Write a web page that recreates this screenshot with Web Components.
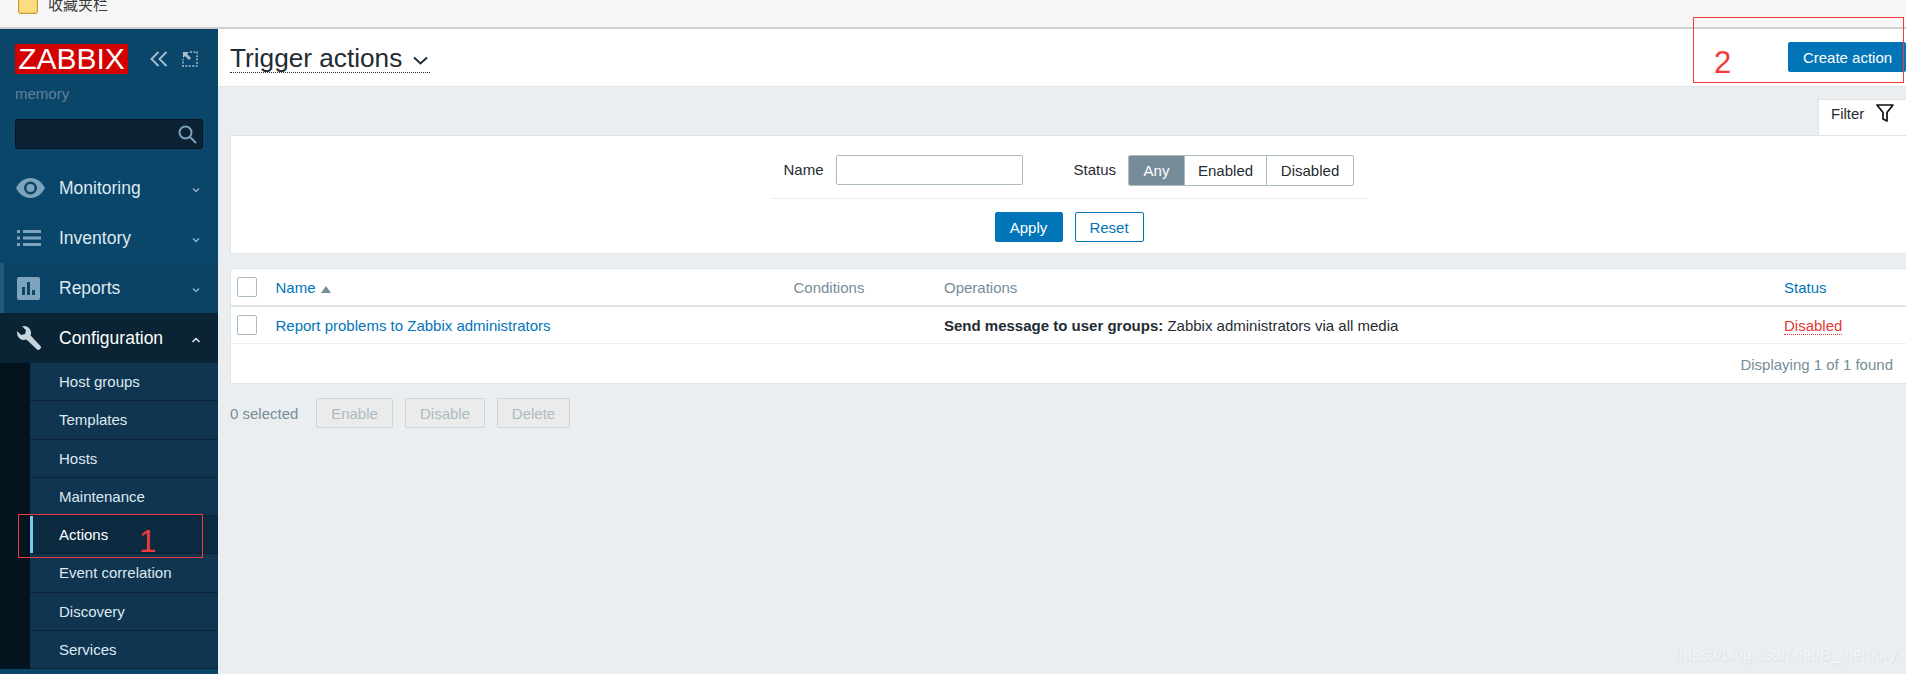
<!DOCTYPE html>
<html lang="en">
<head>
<meta charset="utf-8">
<title>Trigger actions</title>
<style>
html,body{margin:0;padding:0;height:674px;overflow:hidden;background:#ebeef0;font:15px "Liberation Sans",Arial,sans-serif;color:#1f2c33}
</style>
</head>
<body>
<z-app>
  <z-bookmarks slot="top">收藏夹栏</z-bookmarks>
  <z-sidebar slot="side">
    <z-nav icon="eye">Monitoring</z-nav>
    <z-nav icon="list">Inventory</z-nav>
    <z-nav icon="chart" mark>Reports</z-nav>
    <z-nav icon="wrench" open>Configuration</z-nav>
    <z-submenu>
      <z-sub>Host groups</z-sub>
      <z-sub>Templates</z-sub>
      <z-sub>Hosts</z-sub>
      <z-sub>Maintenance</z-sub>
      <z-sub selected>Actions</z-sub>
      <z-sub>Event correlation</z-sub>
      <z-sub>Discovery</z-sub>
      <z-sub>Services</z-sub>
    </z-submenu>
  </z-sidebar>
  <z-header slot="main">Trigger actions</z-header>
  <z-filter slot="main"></z-filter>
  <z-table slot="main"></z-table>
  <z-actions slot="main"></z-actions>
  <z-note slot="over" n="1" style="left:18px;top:514px;width:183px;height:42px;--nx:120px;--ny:11px"></z-note>
  <z-note slot="over" n="2" style="left:1693px;top:17px;width:209px;height:64px;--nx:20px;--ny:29px"></z-note>
  <z-mark slot="over">https://blog.csdn.net/B_memory</z-mark>
</z-app>
<script>
function def(name, html){
  customElements.define(name, class extends HTMLElement{
    constructor(){super();const r=this.attachShadow({mode:'open'});r.innerHTML=typeof html==='function'?html(this):html;}
  });
}
const ICONS={
 eye:'<svg width="29" height="20" viewBox="0 0 29 20"><path fill="#7ea3bd" fill-rule="evenodd" d="M14.5 0C8 0 3 4.200 0 10c3 5.800 8 10 14.500 10S26 15.800 29 10C26 4.200 21 0 14.500 0zm0 3.500a6.500 6.500 0 1 1 0 13 6.500 6.500 0 0 1 0-13zm0 2.500a4 4 0 1 0 0 8 4 4 0 0 0 0-8z"/></svg>',
 list:'<svg width="24" height="16" viewBox="0 0 24 16"><path fill="#7ea3bd" d="M0 0h3v3H0zM6 0h18v3H6zM0 6.500h3v3H0zM6 6.500h18v3H6zM0 13h3v3H0zM6 13h18v3H6z"/></svg>',
 chart:'<svg width="23" height="23" viewBox="0 0 23 23"><rect width="23" height="23" rx="2" fill="#7ea3bd"/><path fill="#0a466a" d="M5 10h3v8H5zM10 5h3v13h-3zM15 13h3v5h-3z"/></svg>',
 wrench:'<svg width="24" height="24" viewBox="0 0 24 24"><path fill="#c6d4de" d="M7 0a7 7 0 0 0-1.800.3L9 4.200 8 8 4.200 9 .3 5.200A7 7 0 0 0 9.400 13.600L20 23.600c.7.600 1.800.6 2.500-.1l1-1c.7-.7.700-1.800 0-2.500L13.600 9.400A7 7 0 0 0 7 0z"/></svg>'
};
def('z-app',`<style>
:host{display:flex;flex-direction:column;width:1906px;height:674px;position:relative;overflow:hidden}
.row{display:flex;flex:1;min-height:0}
.main{flex:1;min-width:0;display:flex;flex-direction:column}
</style><slot name="top"></slot><div class="row"><slot name="side"></slot><div class="main"><slot name="main"></slot></div></div><slot name="over"></slot>`);
def('z-bookmarks',`<style>
:host{display:flex;height:27px;flex:none;box-sizing:content-box;background:#f6f6f6;border-bottom:2px solid #cfcfcf;overflow:hidden;align-items:flex-end;padding-left:18px;gap:10px;color:#3c3c3c;font:15px "Liberation Sans","Noto Sans CJK SC",sans-serif}
svg{flex:none;margin-bottom:13px}
span{line-height:17px;margin-bottom:14px}
</style><svg width="20" height="20" viewBox="0 0 20 20"><path fill="#fcdc80" stroke="#c99f32" stroke-width="1.200" d="M.6 2.500A2 2 0 0 1 2.500.6h15a2 2 0 0 1 1.900 1.900v15a2 2 0 0 1-1.900 1.900h-15a2 2 0 0 1-1.900-1.900z"/></svg><span><slot></slot></span>`);
def('z-sidebar',`<style>
:host{display:flex;flex-direction:column;width:218px;flex:none;background:#0a466a;box-sizing:border-box;padding-bottom:5px}
.brand{display:flex;align-items:center;height:30px;margin:15px 0 0 15px}
.logo{width:113px;height:30px;background:#d40000;color:#fff;font:400 30px/30px "Liberation Sans",sans-serif;text-align:center;flex:none}
.c1{margin-left:22px}.c2{margin-left:14px}
.site{margin:11px 0 0 15px;height:18px;line-height:18px;color:#5f8299;font-size:15px}
.search{margin:16px 15px 0;height:30px;box-sizing:border-box;background:#0a2233;border:1px solid #04141f;border-radius:3px;display:flex;align-items:center;justify-content:flex-end;padding-right:5px}
.nav{margin-top:14px;display:flex;flex-direction:column;flex:1;min-height:0}
</style>
<div class="brand"><div class="logo">ZABBIX</div>
<svg class="c1" width="18" height="18" viewBox="0 0 18 18" fill="none" stroke="#a9c2d3" stroke-width="1.800"><path d="M8.500 2 1.500 9l7 7M16.500 2l-7 7 7 7"/></svg>
<svg class="c2" width="16" height="16" viewBox="0 0 16 16" fill="none" stroke="#a9c2d3" stroke-width="1.400"><path stroke-dasharray="2 1.400" d="M8 1h7v14H1V8"/><path fill="#a9c2d3" stroke="none" d="M1 1h6L5 3l4 4-2 2-4-4-2 2z"/></svg></div>
<div class="site">memory</div>
<div class="search"><svg width="19" height="19" viewBox="0 0 19 19" fill="none" stroke="#7ea3bd" stroke-width="2"><circle cx="7.500" cy="7.500" r="6"/><path d="m12 12 6 6"/></svg></div>
<div class="nav"><slot></slot></div>`);
def('z-nav',(el)=>`<style>
:host{display:flex;align-items:center;height:50px;flex:none;color:#dfe9f0;font-size:17.500px;position:relative;box-sizing:border-box}
:host([mark]){box-shadow:inset 4px 0 0 #24597b;background:#0a4265}
:host([open]){background:#0a2435;color:#fff}
.i{width:59px;flex:none;display:flex;padding-left:17px;box-sizing:border-box;align-items:center}
:host([icon=eye]) .i{padding-left:16px}
.t{flex:1}
.ch{flex:none;margin:3px 18px 0 0}
</style><div class="i">${ICONS[el.getAttribute('icon')]}</div><div class="t"><slot></slot></div><svg class="ch" width="8" height="6" viewBox="0 0 8 6" fill="none" stroke="${el.hasAttribute('open')?'#e6edf2':'#8fb0c6'}" stroke-width="1.500">${el.hasAttribute('open')?'<path d="M.5 5 4 1.500 7.500 5"/>':'<path d="M1 1.500 4 4.500 7 1.500"/>'}</svg>`);
def('z-submenu',`<style>
:host{display:flex;flex-direction:column;flex:1;min-height:0;padding-left:30px;background:#03141f}
</style><slot></slot>`);
def('z-sub',`<style>
:host{display:flex;align-items:center;flex:1;background:#0f3550;border-bottom:1px solid #0a2233;box-sizing:border-box;padding-left:29px;color:#dfe9f0;font-size:15px}
:host([selected]){background:#0b2a40;color:#fff;box-shadow:inset 3px 0 0 #7ec5f0}
</style><slot></slot>`);
def('z-btn',`<style>
:host{display:flex;align-items:center;justify-content:center;height:30px;box-sizing:border-box;border:1px solid #0275b8;border-radius:2px;color:#0275b8;background:#fff;font-size:15px;flex:none}
:host([primary]){background:#0275b8;color:#fff}
:host([off]){background:#ebebeb;border-color:#ccd5d9;color:#acbbc2}
</style><slot></slot>`);
def('z-header',`<style>
:host{display:flex;height:57px;flex:none;box-sizing:content-box;background:#fff;border-bottom:1px solid #dfe4e7;padding-left:12px}
.t{height:44px;box-sizing:border-box;padding-top:15px;display:flex;align-items:center;gap:11px;border-bottom:1px dotted #1f2c33;font-size:26.200px;color:#1f2c33;padding-right:2px}
.wrap{display:flex;flex:1;align-items:flex-start}
.btn{margin:13px 0 0 auto;padding-left:1px}
</style><div class="wrap"><div class="t"><span><slot></slot></span><svg width="15" height="9" viewBox="0 0 15 9" fill="none" stroke="#1f2c33" stroke-width="2" style="margin-top:5px"><path d="M1 1.500 7.500 7.500 14 1.500"/></svg></div><z-btn class="btn" primary style="width:118px">Create action</z-btn></div>`);
def('z-check',`<style>
:host{display:block;width:20px;height:20px;box-sizing:border-box;background:#fff;border:1px solid #acbbc2;border-radius:2px}
</style>`);
def('z-filter',`<style>
:host{display:flex;flex-direction:column;flex:none;margin:12px 0 0 12px}
.tab{align-self:flex-end;width:88px;height:36px;box-sizing:border-box;background:#fff;border:solid #dfe4e7;border-width:1px 0 0 1px;display:flex;align-items:center;padding:0 0 9px 12px;gap:12px}
.tab span{width:33px;white-space:nowrap}
.panel{height:119px;box-sizing:border-box;background:#fff;border:1px solid #dfe4e7;border-right:0;display:flex;flex-direction:column;align-items:center}
.top{width:597px;height:44px;box-sizing:border-box;margin-top:19px;margin-left:1px;border-bottom:1px solid #ebeef0;display:flex;align-items:flex-start;padding-left:13px}
.lab{line-height:30px}
.in{width:187px;height:30px;box-sizing:border-box;border:1px solid #acbbc2;border-radius:2px;margin-left:12px;background:#fff}
.st{margin-left:51px}
.seg{display:flex;height:31px;margin-left:12px;box-sizing:border-box;border:1px solid #acbbc2;border-radius:2px;overflow:hidden}
.seg div{display:flex;align-items:center;justify-content:center;border-left:1px solid #acbbc2;box-sizing:border-box}
.seg .a{width:55px;background:#768d99;color:#fff;border-left:0}
.seg .b{width:82px}.seg .c{width:87px}
.bot{display:flex;gap:12px;margin-top:13px;margin-left:1px}
</style>
<div class="tab"><span>Filter</span><svg width="18" height="18" viewBox="0 0 18 18" fill="none" stroke="#111" stroke-width="1.700" stroke-linejoin="round"><path d="M1 1h16l-6 7.500V17l-4-2V8.500z"/></svg></div>
<div class="panel"><div class="top"><span class="lab">Name</span><div class="in"></div><span class="lab st">Status</span><div class="seg"><div class="a">Any</div><div class="b">Enabled</div><div class="c">Disabled</div></div></div>
<div class="bot"><z-btn primary style="width:68px">Apply</z-btn><z-btn style="width:69px">Reset</z-btn></div></div>`);
def('z-table',`<style>
:host{display:block;flex:none;margin:14px 0 0 12px;background:#fff;border:1px solid #dfe4e7;border-right:0;box-sizing:border-box;height:116px;overflow:hidden}
.r{display:grid;grid-template-columns:44.500px 518px 150.500px 840px 1fr;align-items:center}
.h{height:36px;border-bottom:2px solid #dfe4e7;color:#768d99}
.d{height:36px;border-bottom:1px solid #ebeef0}
.ck{padding-left:6px}
a{color:#0275b8;text-decoration:none}
.tri{display:inline-block;width:0;height:0;border:5.500px solid transparent;border-top:0;border-bottom:7px solid #768d99;margin-left:5px;vertical-align:0}
b{font-weight:700}
.off{color:#e33734;border-bottom:1px dotted #e33734}
.foot{height:40px;display:flex;align-items:center;justify-content:flex-end;padding-right:13px;color:#768d99}
</style>
<div class="r h"><div class="ck"><z-check></z-check></div><div><a>Name</a><i class="tri"></i></div><div>Conditions</div><div>Operations</div><div><a>Status</a></div></div>
<div class="r d"><div class="ck"><z-check></z-check></div><div><a>Report problems to Zabbix administrators</a></div><div></div><div><b>Send message to user groups:</b> Zabbix administrators via all media</div><div><span class="off">Disabled</span></div></div>
<div class="foot">Displaying 1 of 1 found</div>`);
def('z-actions',`<style>
:host{display:flex;flex:none;align-items:center;margin:14px 0 0 12px;height:30px;color:#768d99}
.s{width:86px}
.g{display:flex;gap:12px}
</style><span class="s">0 selected</span><div class="g"><z-btn off style="width:77px">Enable</z-btn><z-btn off style="width:80px">Disable</z-btn><z-btn off style="width:73px">Delete</z-btn></div>`);
def('z-note',(el)=>`<style>
:host{position:absolute;display:block;border:1px solid #f33a3a;box-sizing:content-box}
span{position:absolute;left:var(--nx);top:var(--ny);font:31px/1 "Liberation Sans",sans-serif;color:#f33a3a}
</style><span>${el.getAttribute('n')}</span>`);
def('z-mark',`<style>
:host{position:absolute;right:9px;top:646px;font-size:15.800px;color:#f2f4f5;text-shadow:1px 1px 1px #dcdfe2}
</style><slot></slot>`);
</script>
</body>
</html>
